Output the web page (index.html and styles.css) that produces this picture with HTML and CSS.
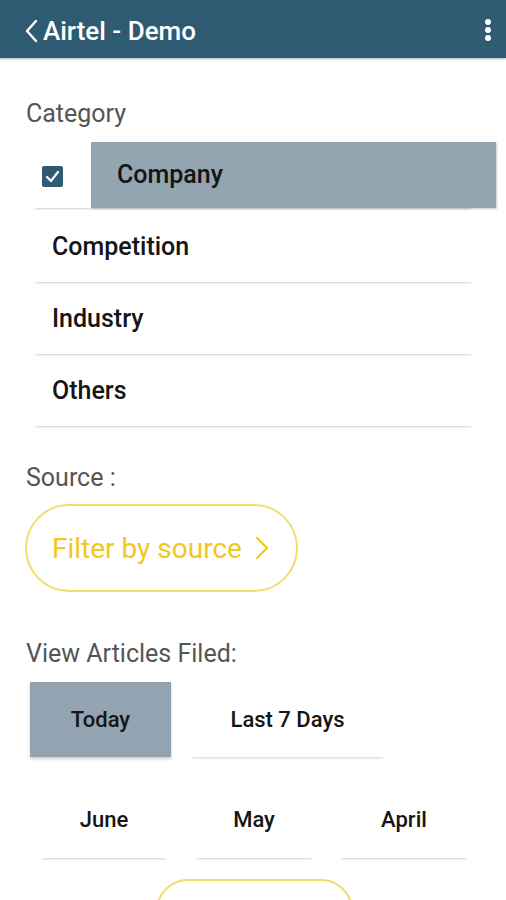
FILE: index.html
```html
<!DOCTYPE html>
<html lang="en">
<head>
  <meta charset="UTF-8" />
  <meta name="viewport" content="width=device-width, initial-scale=1" />
  <title>Airtel - Demo</title>
  <link rel="stylesheet" href="styles.css">
</head>
<body>
  <div class="topbar">
    <svg class="back" width="13" height="24" viewBox="0 0 13 24">
      <path d="M11 2 L2 12 L11 22" fill="none" stroke="#fff" stroke-width="2.4" stroke-linecap="round" stroke-linejoin="round"/>
    </svg>
    <div class="title">Airtel - Demo</div>
    <div class="menu">
      <span></span><span></span><span></span>
    </div>
  </div>

  <div class="content">
    <div class="label cat-label">Category</div>

    <div class="cat-list">
      <div class="cat-card selected">
        <div class="check-cell">
          <svg width="21" height="21" viewBox="0 0 21 21">
            <rect x="0" y="0" width="21" height="21" rx="2" fill="#2e5a72"/>
            <path d="M5 11 L9 15 L16 6" fill="none" stroke="#fff" stroke-width="2.2" stroke-linecap="round" stroke-linejoin="round"/>
          </svg>
        </div>
        <div class="cat-name">Company</div>
      </div>
      <div class="cat-card"><div class="cat-name">Competition</div></div>
      <div class="cat-card"><div class="cat-name">Industry</div></div>
      <div class="cat-card"><div class="cat-name">Others</div></div>
    </div>

    <div class="label src-label">Source :</div>
    <div class="pill">
      Filter by source
      <svg width="14" height="24" viewBox="0 0 14 24">
        <path d="M2 2 L12 12 L2 22" fill="none" stroke="#f2c71e" stroke-width="2.2" stroke-linecap="round" stroke-linejoin="round"/>
      </svg>
    </div>

    <div class="label view-label">View Articles Filed:</div>
    <div class="range-row">
      <div class="range active today">Today</div>
      <div class="range last7">Last 7 Days</div>
    </div>
    <div class="month-row">
      <div class="range">June</div>
      <div class="range">May</div>
      <div class="range">April</div>
    </div>
    <div class="pill-bottom"></div>
  </div>
</body>
</html>
```

FILE: styles.css
```css
body {
  margin: 0;
  background: #fff;
  font-family: Roboto, "Noto Sans", sans-serif;
  color: #111;
  overflow: hidden;
  height: 900px;
}

/* top bar */
.topbar {
  height: 58px;
  background: #2e5a72;
  display: flex;
  align-items: center;
  padding: 4px 15px 0 25px;
  box-sizing: border-box;
  box-shadow: 0 1px 2px rgba(0, 0, 0, 0.3);
}

.back {
  margin-right: 5px;
}

.title {
  color: #fff;
  font-size: 26px;
  font-weight: 500;
  flex: 1;
}

.menu {
  display: flex;
  flex-direction: column;
  gap: 2px;
  margin-top: -3px;
}

.menu span {
  width: 6px;
  height: 6px;
  border-radius: 50%;
  background: #fff;
}

.content {
  padding: 0 26px;
}

.label {
  font-size: 25px;
  color: #555;
}

.cat-label {
  margin-top: 42px;
  height: 28px;
  line-height: 28px;
}

/* category list */
.cat-list {
  margin: 14px 0 0 7px;
  width: 440px;
}

.cat-card {
  height: 72px;
  display: flex;
  align-items: center;
  box-shadow: 0 3px 2px -2px rgba(0, 0, 0, 0.18);
}

.cat-card .cat-name {
  padding-left: 19px;
  font-size: 25px;
  font-weight: 500;
  color: #151515;
}

.cat-card.selected {
  height: 66px;
  margin-bottom: 2px;
  align-items: stretch;
}

.check-cell {
  width: 49px;
  padding-left: 9px;
  display: flex;
  align-items: center;
  padding-top: 2px;
}

.selected .cat-name {
  flex: 1;
  margin-right: -23px;
  background: #93a5b1;
  display: flex;
  align-items: center;
  padding-left: 26px;
  padding-bottom: 2px;
  box-shadow: 1px 1px 2px rgba(0, 0, 0, 0.2);
}

/* source */
.src-label {
  margin-top: 38px;
  height: 28px;
  line-height: 28px;
}

.pill {
  margin: 12px 0 0 -1px;
  height: 84px;
  width: 244px;
  border: 2px solid #f0dd6c;
  border-radius: 44px;
  display: flex;
  align-items: center;
  gap: 13px;
  padding-left: 25px;
  font-size: 28px;
  color: #f2c71e;
}

/* date ranges */
.view-label {
  margin-top: 48px;
  height: 28px;
  line-height: 28px;
}

.range-row {
  display: flex;
  margin: 14px 0 0 4px;
  gap: 19px;
}

.range {
  display: flex;
  align-items: center;
  justify-content: center;
  font-size: 22px;
  font-weight: 500;
  color: #151515;
  box-shadow: 0 3px 2px -2px rgba(0, 0, 0, 0.18);
}

.today {
  width: 141px;
  height: 75px;
}

.range.active {
  background: #92a4b1;
  box-shadow: 0 2px 3px rgba(0, 0, 0, 0.2);
}

.last7 {
  width: 195px;
  height: 75px;
}

.month-row {
  display: grid;
  grid-template-columns: 128px 120px 128px;
  column-gap: 26px;
  margin: 23px 0 0 14px;
}

.month-row .range {
  height: 78px;
}

.pill-bottom {
  margin: 21px auto 0;
  width: 193px;
  height: 60px;
  border: 2px solid #f0dd6c;
  border-radius: 43px;
  position: relative;
  left: 1px;
}
```
